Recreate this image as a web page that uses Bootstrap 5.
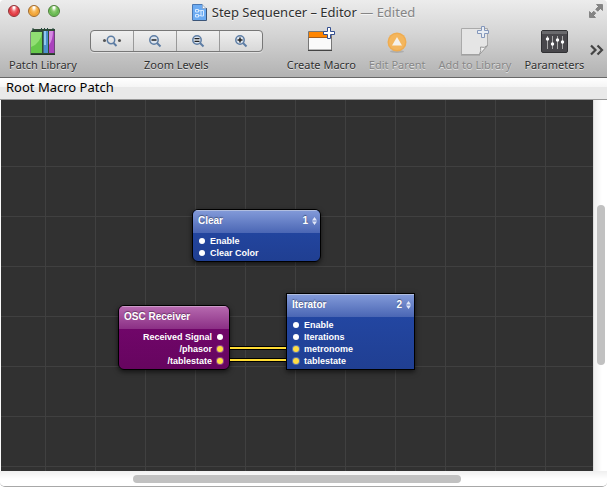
<!DOCTYPE html>
<html lang="en">
<head>
<meta charset="utf-8">
<meta name="viewport" content="width=device-width, initial-scale=1">
<title>Step Sequencer – Editor</title>
<link href="https://cdn.jsdelivr.net/npm/bootstrap@5.3.0/dist/css/bootstrap.min.css" rel="stylesheet">
<style>
  body { background: #fff; font-family: "Noto Sans", "Open Sans", sans-serif; color: #000; }
  .window { height: 100vh; border-radius: 4px 4px 5px 5px; background: #fbfbfb; border-bottom: 1px solid #a8a8a8; }
  .chrome { background: linear-gradient(#ececec, #d4d4d4 45%, #b2b2b2); border-bottom: 1px solid #686868; height: 78px; }
  .titlebar { height: 24px; font-size: 13px; line-height: 24px; color: #303030; text-shadow: 0 1px 0 #f4f4f4; }
  .titlebar .doc { margin-right: 5px; }
  .lights { left: 8px; top: 5px; gap: 8px; }
  .light { width: 12px; height: 12px; border-radius: 50%; border: 1px solid #0007; }
  .light-close { background: radial-gradient(ellipse at 50% 15%, #fff 8%, #ee6a70 35%, #e0333c 65%, #ff9a94); border-color: #8f2f33; }
  .light-min { background: radial-gradient(ellipse at 50% 15%, #fff 8%, #f8bd62 35%, #f0a032 65%, #ffea8c); border-color: #a0682b; }
  .light-zoom { background: radial-gradient(ellipse at 50% 15%, #fff 8%, #8ccb70 35%, #62b64d 65%, #c2f6a0); border-color: #4b7e38; }
  .full { right: 3px; top: 3px; }
  .muted { color: #858585; }
  .plain { background: none; border: 0; padding: 0; color: #303030; }
  .tools { padding: 0 3px 0 9px; }
  .tool { font-size: 11px; line-height: 14px; color: #303030; text-shadow: 0 1px 0 #e2e2e2; white-space: nowrap; }
  .tool + .tool { margin-left: 13px; }
  .tool .pic { height: 34px; display: flex; align-items: center; justify-content: center; }
  .tool:disabled { color: #878787; }
  .segments { width: 173px; height: 22px; border: 1px solid #777; border-radius: 4px; background: linear-gradient(#efefef, #d8d8d8); box-shadow: 0 1px 0 #e0e0e0; }
  .segments button { flex: 1 1 0; }
  .segments button + button { border-left: 1px solid #999; }
  .pathbar { height: 22px; padding-left: 6px; font-size: 13px; line-height: 19px; background: linear-gradient(#fff, #f5f5f5 9px, #e9e9e9 9px); border-bottom: 1px solid #999; }
  .work { min-height: 0; padding-left: 1px; }
  .board { background-color: #313131; background-image: linear-gradient(90deg, #404040 1px, transparent 1px), linear-gradient(#404040 1px, transparent 1px); background-size: 50px 50px; background-position: 44px 16px; }
  .vbar { width: 14px; background: linear-gradient(90deg, #efefef, #fff 8px); border-left: 1px solid #ddd; }
  .hbar { height: 15px; background: linear-gradient(#efefef, #fff 8px); }
  .thumb { background: #c1c1c1; border-radius: 4px; }
  .vbar .thumb { width: 8px; height: 43%; margin: 105px 0 0 3px; }
  .hbar .thumb { height: 8px; width: 54%; margin: 4px 0 0 133px; }
  .node { border: 1px solid #000; color: #fff; font: bold 9px/12px "Liberation Sans", Arial, sans-serif; box-shadow: 0 2px 5px #0009; overflow: hidden; }
  .node.rounded-node { border-radius: 6px; }
  .node header { height: 23px; font-size: 10px; line-height: 20px; padding: 0 3px 2px 5px; text-shadow: 0 -1px 1px #0006; }
  .node ul { padding: 2px 6px; margin: 0; list-style: none; }
  .node li { display: flex; align-items: center; gap: 5px; }
  .blue { width: 129px; background: linear-gradient(#2449a8, #203f92); }
  .blue header { background: linear-gradient(#8199d8, #4a66b4); border-top: 1px solid #b0bddf; }
  .purple { width: 112px; background: linear-gradient(#76066f, #66055f); }
  .purple header { background: linear-gradient(#b568ae, #8b2f85); border-top: 1px solid #cc9bc9; }
  .port { width: 6px; height: 6px; border-radius: 50%; background: #fff; flex: none; }
  .port.on { background: #ffdc45; box-shadow: 0 0 0 1px #fff4; }
  .at-clear { left: 191px; top: 109px; }
  .at-osc { left: 117px; top: 205px; }
  .at-iter { left: 285px; top: 193px; }
  .wires { left: 228px; top: 244px; }
  svg { display: block; flex: none; }
</style>
</head>
<body>
<div class="window d-flex flex-column overflow-hidden">
  <div class="chrome flex-shrink-0">
    <div class="titlebar position-relative d-flex justify-content-center align-items-center">
      <div class="lights position-absolute d-flex">
        <button class="light light-close p-0" aria-label="Close"></button>
        <button class="light light-min p-0" aria-label="Minimize"></button>
        <button class="light light-zoom p-0" aria-label="Zoom"></button>
      </div>
      <svg class="doc" width="15" height="17" viewBox="0 0 15 17"><path d="M1 1h9.500L14 4.500V16H1z" fill="#6cabf2"/><path d="M.5 16V.5h10" fill="none" stroke="#4a78b4"/><path d="M.5 16.500h14V4" fill="none" stroke="#3c5578"/><path d="M10.500 1v3.500H14z" fill="#fff" stroke="#8a9cb4" stroke-width=".7"/><path d="M3.500 5.500h3v2.500h-3zM3.500 10.500h3V13h-3zM9 6.500h2.500V12H9zM6.500 6.700H9M6.500 11.700H9" fill="none" stroke="#d8eaff"/></svg>
      <span>Step Sequencer – Editor <span class="muted">— Edited</span></span>
      <button class="full plain position-absolute" aria-label="Full screen"><svg width="16" height="16" viewBox="0 0 16 16" fill="#858585" stroke="#666" stroke-width=".6"><path d="M8.500 1.500h6v6l-2-2-2.800 2.800-2-2 2.800-2.800zM1.500 8.500l2 2 2.300-2.300 2 2-2.300 2.300 2 2h-6z"/></svg></button>
    </div>
    <div class="tools d-flex align-items-start">
      <button class="tool plain">
        <span class="pic"><svg width="28" height="29" viewBox="0 0 28 29"><path d="M1.500 5 4 2h22v25H1.500z" fill="#304b35"/><path d="M2 5h11v21H2z" fill="#66c84a"/><path d="M2 5h11q-1 11-11 15z" fill="#91df73"/><path d="M14.500 4h4.500v22h-4.500z" fill="#4c91ce"/><path d="M15 4h2v14h-2z" fill="#91c9ef"/><path d="M20 4h5.500v22H20z" fill="#aa42bd"/><path d="M20 4h4q0 9-4 14z" fill="#d48ae0"/><path d="M4 3V1M12.500 3V1M15.500 3V1M18.500 3V1M24 3V1" stroke="#264a40"/><path d="M1.500 27.500h24.500" stroke="#263929"/></svg></span>
        Patch Library
      </button>
      <div class="tool text-center">
        <div class="pic"><div class="segments d-flex" role="group" aria-label="Zoom Levels">
          <button class="plain d-flex align-items-center justify-content-center" aria-label="Actual size"><svg width="20" height="14" viewBox="0 0 20 14"><circle cx="9" cy="6" r="3.700" fill="none" stroke="#5d7da4" stroke-width="1.500"/><path d="m11.500 9 3 3" stroke="#5d7da4" stroke-width="2"/><circle cx="2.500" cy="6.500" r="1.500" fill="#555"/><circle cx="17.500" cy="6.500" r="1.500" fill="#555"/></svg></button>
          <button class="plain d-flex align-items-center justify-content-center" aria-label="Zoom out"><svg width="14" height="14" viewBox="0 0 14 14"><circle cx="6" cy="6" r="4.200" fill="#dce4ee" stroke="#5d7da4" stroke-width="1.500"/><path d="m9 9 3.500 3.500" stroke="#5d7da4" stroke-width="2"/><path d="M3.500 6h5" stroke="#222" stroke-width="1.400"/></svg></button>
          <button class="plain d-flex align-items-center justify-content-center" aria-label="Zoom to fit"><svg width="14" height="14" viewBox="0 0 14 14"><circle cx="6" cy="6" r="4.200" fill="#dce4ee" stroke="#5d7da4" stroke-width="1.500"/><path d="m9 9 3.500 3.500" stroke="#5d7da4" stroke-width="2"/><path d="M3.500 4.700h5M3.500 7.300h5" stroke="#222" stroke-width="1.300"/></svg></button>
          <button class="plain d-flex align-items-center justify-content-center" aria-label="Zoom in"><svg width="14" height="14" viewBox="0 0 14 14"><circle cx="6" cy="6" r="4.200" fill="#dce4ee" stroke="#5d7da4" stroke-width="1.500"/><path d="m9 9 3.500 3.500" stroke="#5d7da4" stroke-width="2"/><path d="M3.500 6h5M6 3.500v5" stroke="#222" stroke-width="1.500"/></svg></button>
        </div></div>
        Zoom Levels
      </div>
      <button class="tool plain ms-4">
        <span class="pic"><svg width="28" height="28" viewBox="0 0 28 28"><path d="M1.500 4.500h23v18.500h-23z" fill="#fafafa" stroke="#777"/><path d="M2 5h22v5H2z" fill="#ff8500"/><path d="M1 23.500h24" stroke="#444"/><path d="M1.500 10.500h23" stroke="#a65d19"/><path d="M20.500.5h3v4h4v3h-4v4h-3v-4h-4v-3h4z" fill="#fff" stroke="#334f91"/></svg></span>
        Create Macro
      </button>
      <button class="tool plain" disabled>
        <span class="pic"><svg width="22" height="24" viewBox="0 0 22 24"><ellipse cx="11" cy="22.500" rx="7" ry="1.500" fill="#888" opacity=".4"/><circle cx="11" cy="13" r="9.500" fill="#efac50"/><circle cx="11" cy="13" r="8" fill="#f4b65d"/><path d="m11 8 5 8.500H6z" fill="#f5f1ea"/></svg></span>
        Edit Parent
      </button>
      <button class="tool plain" disabled>
        <span class="pic"><svg width="30" height="32" viewBox="0 0 30 32"><path d="M1.500 3.500h26v17l-8 9h-18z" fill="#e5e5e5" stroke="#aaa"/><path d="M1 30h19" stroke="#999"/><path d="M19.500 29.500q2-4 1-7.500 4 1.500 7-1.500z" fill="#f5f5f5" stroke="#999"/><path d="M21.500 1.500h3v4h4v3h-4v4h-3v-4h-4v-3h4z" fill="#e9eef4" stroke="#8497bb"/></svg></span>
        Add to Library
      </button>
      <button class="tool plain">
        <span class="pic"><svg width="27" height="25" viewBox="0 0 27 25"><rect x=".5" y="1.500" width="26" height="22" rx="1.500" fill="#48474b" stroke="#303033"/><path d="M1 2h25v3H1z" fill="#69696c"/><path d="M6.500 7v13M11.500 7v13M16.500 7v13M21.500 7v13" stroke="#aaa"/><g fill="#fff"><circle cx="6.500" cy="10" r="1.700"/><circle cx="11.500" cy="15" r="1.700"/><circle cx="16.500" cy="11" r="1.700"/><circle cx="21.500" cy="13" r="1.700"/></g></svg></span>
        Parameters
      </button>
      <button class="plain ms-auto mt-3" aria-label="More tools"><svg class="mt-1" width="14" height="12" viewBox="0 0 14 12" fill="none" stroke="#444" stroke-width="2.200"><path d="m1 1.500 4.500 4.500L1 10.500M7.500 1.500 12 6l-4.500 4.500"/></svg></button>
    </div>
  </div>
  <div class="pathbar flex-shrink-0">Root Macro Patch</div>
  <main class="work d-flex flex-grow-1">
    <div class="board position-relative flex-grow-1 overflow-hidden">
      <section class="node rounded-node blue position-absolute at-clear">
        <header class="d-flex align-items-center"><span class="me-auto">Clear</span><span class="me-1">1</span><svg width="5" height="8" viewBox="0 0 5 8" fill="#dfe6f7"><path d="m2.500 0 2.500 3.400H0zM2.500 8 5 4.600H0z"/></svg></header>
        <ul><li><i class="port"></i>Enable</li><li><i class="port"></i>Clear Color</li></ul>
      </section>
      <section class="node rounded-node purple position-absolute at-osc">
        <header>OSC Receiver</header>
        <ul><li class="justify-content-end">Received Signal<i class="port"></i></li><li class="justify-content-end">/phasor<i class="port on"></i></li><li class="justify-content-end">/tablestate<i class="port on"></i></li></ul>
      </section>
      <section class="node blue position-absolute at-iter">
        <header class="d-flex align-items-center"><span class="me-auto">Iterator</span><span class="me-1">2</span><svg width="5" height="8" viewBox="0 0 5 8" fill="#dfe6f7"><path d="m2.500 0 2.500 3.400H0zM2.500 8 5 4.600H0z"/></svg></header>
        <ul><li><i class="port"></i>Enable</li><li><i class="port"></i>Iterations</li><li><i class="port on"></i>metronome</li><li><i class="port on"></i>tablestate</li></ul>
      </section>
      <svg class="wires position-absolute" width="58" height="20" viewBox="0 0 58 20"><path d="M1 4h56M1 16h56" stroke="#000" stroke-width="4"/><path d="M1 4h56M1 16h56" stroke="#ffdc35" stroke-width="2"/></svg>
    </div>
    <div class="vbar flex-shrink-0"><div class="thumb"></div></div>
  </main>
  <div class="hbar flex-shrink-0"><div class="thumb"></div></div>
</div>
<script src="https://cdn.jsdelivr.net/npm/bootstrap@5.3.0/dist/js/bootstrap.bundle.min.js"></script>
</body>
</html>
